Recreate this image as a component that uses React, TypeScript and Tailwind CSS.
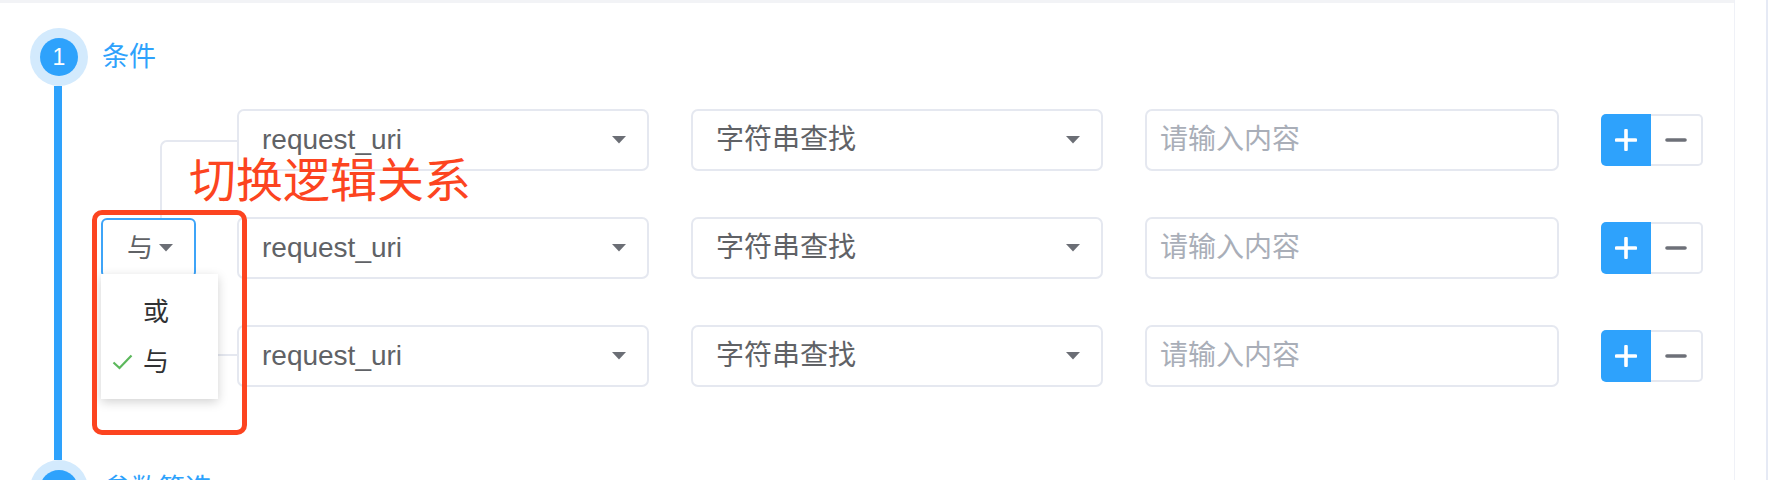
import React from "react";

const FONT = "font-['Liberation_Sans','Noto_Sans_CJK_SC',sans-serif]";

function Caret({ className = "" }: { className?: string }) {
  return (
    <svg width="14" height="8" viewBox="0 0 14 8" className={className}>
      <polygon points="0,0 14,0 7,7.5" fill="#6b6e75" />
    </svg>
  );
}

function Select({ value }: { value: string }) {
  return (
    <div className="w-[412px] h-[62px] border-2 border-[#e5e8f0] rounded-[7px] bg-white flex items-center justify-between pl-[23px] pr-[21px]">
      <span className="text-[28px] leading-none text-[#606266]">{value}</span>
      <Caret />
    </div>
  );
}

function Input() {
  return (
    <div className="w-[414px] h-[62px] border-2 border-[#e5e8f0] rounded-[7px] bg-white flex items-center pl-[13px]">
      <span className="text-[28px] leading-none text-[#a9aeb8]">请输入内容</span>
    </div>
  );
}

function Buttons() {
  return (
    <div className="flex h-[52px]">
      <div className="w-[50px] h-[52px] bg-[#2ea2fc] rounded-l-[5px] flex items-center justify-center">
        <svg width="22" height="22" viewBox="0 0 22 22">
          <path d="M11 1.5V20.5M1.5 11H20.5" stroke="#fff" strokeWidth="3.6" strokeLinecap="round" />
        </svg>
      </div>
      <div className="w-[52px] h-[52px] border-2 border-l-0 border-[#e5e8f0] rounded-r-[5px] bg-white flex items-center justify-center">
        <svg width="22" height="6" viewBox="0 0 22 6">
          <path d="M2 3H20" stroke="#6d7078" strokeWidth="3.6" strokeLinecap="round" />
        </svg>
      </div>
    </div>
  );
}

function Row() {
  return (
    <div className="flex items-center gap-[42px] h-[62px]">
      <Select value="request_uri" />
      <Select value="字符串查找" />
      <Input />
      <Buttons />
    </div>
  );
}

function StepCircle({ n }: { n: string }) {
  return (
    <div className="w-[58px] h-[58px] rounded-full bg-[#d3eafd] flex items-center justify-center shrink-0">
      <div className="w-[38px] h-[38px] rounded-full bg-[#2ea2fc] flex items-center justify-center text-white text-[23px] leading-none">
        {n}
      </div>
    </div>
  );
}

export default function App() {
  return (
    <div className={`relative w-[1768px] h-[480px] overflow-hidden bg-white flex ${FONT}`}>
      <div className="w-[1735px] h-full border-r border-[#eff1f7] flex flex-col">
        <div className="h-[3px] bg-[#f2f3f6] shrink-0" />
        <div className="pl-[30px] pt-[25px] flex flex-col">
          {/* step 1 header */}
          <div className="flex items-center gap-[14px] h-[58px]">
            <StepCircle n="1" />
            <span className="text-[27px] leading-none text-[#2ea2fc]">条件</span>
          </div>
          {/* step 1 body */}
          <div className="flex h-[374px]">
            <div className="w-[58px] flex justify-center shrink-0">
              <div className="w-[8px] h-full bg-[#2ea2fc] -translate-x-[1px]" />
            </div>
            <div className="flex pt-[23px]">
              {/* logic column */}
              <div className="relative w-[149px] h-[278px] flex items-center">
                <div className="absolute left-[72px] right-0 top-[31px] bottom-[31px] border-2 border-r-0 border-[#e5e8f0] rounded-l-[7px]" />
                <div className="relative ml-[13px] w-[95px] h-[60px] border-2 border-[#3ea4f8] rounded-[6px] bg-white flex items-center pl-[24px] gap-[6px] z-10">
                  <span className="text-[26px] leading-none text-[#606266]">与</span>
                  <Caret />
                  {/* dropdown */}
                  <div className="absolute left-[-2px] top-[54px] w-[117px] h-[125px] bg-white shadow-[0_3px_10px_rgba(0,0,0,0.18)] pt-[13px] flex flex-col">
                    <div className="relative h-[50px] flex items-center pl-[42px]">
                      <span className="text-[26px] leading-none text-[#303133]">或</span>
                    </div>
                    <div className="relative h-[50px] flex items-center pl-[42px]">
                      <svg width="21" height="16" viewBox="0 0 21 16" className="absolute left-[11px] top-[17px]">
                        <polyline points="1.5,8.5 7.5,14 19.5,1.5" fill="none" stroke="#5cb85c" strokeWidth="2.2" />
                      </svg>
                      <span className="text-[26px] leading-none text-[#303133]">与</span>
                    </div>
                  </div>
                </div>
              </div>
              {/* rows */}
              <div className="flex flex-col gap-[46px]">
                <Row />
                <Row />
                <Row />
              </div>
            </div>
          </div>
          {/* step 2 header */}
          <div className="flex items-center gap-[16px] h-[58px]">
            <StepCircle n="2" />
            <span className="text-[27px] leading-none text-[#2ea2fc]">参数筛选</span>
          </div>
        </div>
      </div>
      <div className="flex-1" />
      <div className="w-[2px] h-full bg-[#e6eaf5]" />

      {/* annotation */}
      <div className="absolute left-[92px] top-[210px] w-[155px] h-[225px] border-[5px] border-[#fc4420] rounded-[10px] z-20" />
      <div className="absolute left-[189px] top-[157px] text-[47px] leading-none text-[#fc4420] whitespace-nowrap z-20">
        切换逻辑关系
      </div>
    </div>
  );
}
